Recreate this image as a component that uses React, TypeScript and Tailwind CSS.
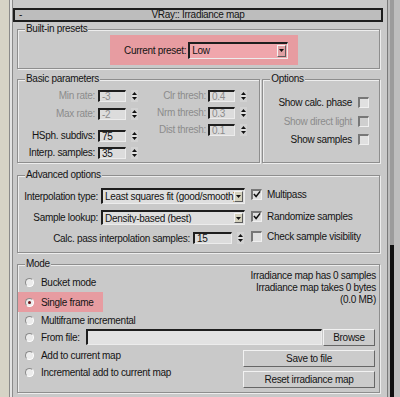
import React from "react";

const sunken =
  "border-t-2 border-l-2 border-t-[#1e1e1e] border-l-[#1e1e1e] border-r border-b border-r-[#ececec] border-b-[#ececec]";

function Spinner() {
  return (
    <span className="flex h-[12px] w-[7px] flex-col items-center justify-center bg-[#d2d2d2]">
      <svg width="7" height="12" viewBox="0 0 7 12">
        <path d="M3.5 2 L6 5 L1 5Z" fill="#111" />
        <path d="M1 6 L6 6" stroke="#f2f2f2" strokeWidth="0.8" />
        <path d="M1 7 L6 7 L3.5 10Z" fill="#111" />
      </svg>
    </span>
  );
}

function Field({ value, w, disabled }: { value: string; w: string; disabled?: boolean }) {
  return (
    <span
      className={`${sunken} ${w} flex h-[12px] items-center bg-[#dcdcdc] pl-[2px] leading-[10px] ${
        disabled ? "text-[#8c8c8c]" : "text-[#111]"
      }`}
    >
      {value}
    </span>
  );
}

function Spin({ value, w, disabled }: { value: string; w: string; disabled?: boolean }) {
  return (
    <span className="flex items-center gap-[5px]">
      <Field value={value} w={w} disabled={disabled} />
      <Spinner />
    </span>
  );
}

function Check({ checked, disabled }: { checked?: boolean; disabled?: boolean }) {
  return (
    <span
      className={`flex h-[11px] w-[11px] items-center justify-center border-t-2 border-l-2 border-r border-b border-t-[#777] border-l-[#777] border-r-[#f0f0f0] border-b-[#f0f0f0] ${
        disabled ? "bg-[#cfcfcf]" : "bg-[#e0e0e0]"
      }`}
    >
      {checked && (
        <svg width="9" height="9" viewBox="0 0 9 9">
          <path d="M1 4 L3.5 6.8 L8 1" stroke="#111" strokeWidth="1.7" fill="none" />
        </svg>
      )}
    </span>
  );
}

function Radio({ checked, dot = "#111" }: { checked?: boolean; dot?: string }) {
  return (
    <span className="flex h-[9px] w-[9px] shrink-0 items-center justify-center rounded-full border border-t-[#8a8a8a] border-l-[#8a8a8a] border-b-white border-r-white bg-[#ececec]">
      {checked && <span className="h-[3px] w-[3px] rounded-full" style={{ background: dot }} />}
    </span>
  );
}

function Arrow({ bg }: { bg: string }) {
  return (
    <span
      className={`flex h-full w-[9px] items-center justify-center border border-t-[#f4f4f4] border-l-[#f4f4f4] border-b-[#5c5c5c] border-r-[#5c5c5c] ${bg}`}
    >
      <svg width="5" height="3" viewBox="0 0 5 3">
        <path d="M0 0 L5 0 L2.5 3Z" fill="#111" />
      </svg>
    </span>
  );
}

function Dropdown({ value, w, h, bg, arrowBg }: { value: string; w: string; h: string; bg: string; arrowBg: string }) {
  return (
    <span className={`${sunken} ${w} ${h} flex items-stretch ${bg} pr-px py-px`}>
      <span className="flex-1 overflow-hidden whitespace-nowrap pl-[2px] leading-[12px]">{value}</span>
      <Arrow bg={arrowBg} />
    </span>
  );
}

function Btn({ label, w }: { label: string; w: string }) {
  return (
    <span
      className={`${w} flex h-[17px] items-center justify-center border border-t-[#f2f2f2] border-l-[#f2f2f2] border-b-[#666] border-r-[#666] bg-[#cbcbcb]`}
    >
      {label}
    </span>
  );
}

function Group({ label, className, children }: { label: string; className: string; children: React.ReactNode }) {
  return (
    <div
      className={`relative border border-[#8e8e8e] shadow-[inset_1px_1px_0_#ededed,1px_1px_0_#ededed] ${className}`}
    >
      <span className="absolute -top-[7px] left-[7px] bg-[#c9c9c9] px-px leading-[12px]">{label}</span>
      {children}
    </div>
  );
}

export default function App() {
  return (
    <div className="flex h-[397px] w-[400px] overflow-hidden bg-[#c9c9c9] font-['Liberation_Sans',Arial,sans-serif] text-[10px] tracking-[-0.3px] text-[#141414]">
      <div className="w-[9px] bg-[#d6d3c6]" />
      <div className="w-px bg-[#8a8a8a]" />
      <div className="w-[2px] bg-[#e4e4e4]" />
      <div className="w-px bg-[#8a8a8a]" />

      <main className="flex w-[374px] flex-col">
        {/* rollout title */}
        <div className="mt-[8px] mr-[4px] grid h-[14px] grid-cols-[20px_1fr_20px] items-center border-2 border-[#1e1e1e] bg-[#bdbdbd] leading-[10px]">
          <span className="pl-[4px]">-</span>
          <span className="text-center">VRay:: Irradiance map</span>
          <span />
        </div>

        <div className="ml-[4px] flex w-[363px] flex-col">
          {/* built-in presets */}
          <Group label="Built-in presets" className="mt-[7px] h-[40px]">
            <div className="ml-[92px] mt-[5px] flex h-[30px] w-[188px] items-center bg-[#e79ca1] pl-[14px]">
              <span>Current preset:</span>
              <span className="ml-[2px]">
                <Dropdown value="Low" w="w-[100px]" h="h-[17px]" bg="bg-[#f0a6ac]" arrowBg="bg-[#dfa0a3]" />
              </span>
            </div>
          </Group>

          <div className="mt-[10px] flex h-[84px]">
            {/* basic parameters */}
            <Group label="Basic parameters" className="flex h-full w-[244px]">
              <div className="flex flex-col pt-[10px] leading-[12px]">
                <div className="flex h-[12px] items-center">
                  <span className="w-[77px] text-right text-[#8c8c8c]">Min rate:</span>
                  <span className="ml-[3px]">
                    <Spin value="-3" w="w-[28px]" disabled />
                  </span>
                </div>
                <div className="mt-[6px] flex h-[12px] items-center">
                  <span className="w-[77px] text-right text-[#8c8c8c]">Max rate:</span>
                  <span className="ml-[3px]">
                    <Spin value="-2" w="w-[28px]" disabled />
                  </span>
                </div>
                <div className="mt-[10px] flex h-[12px] items-center">
                  <span className="w-[77px] text-right">HSph. subdivs:</span>
                  <span className="ml-[3px]">
                    <Spin value="75" w="w-[28px]" />
                  </span>
                </div>
                <div className="mt-[5px] flex h-[12px] items-center">
                  <span className="w-[77px] text-right">Interp. samples:</span>
                  <span className="ml-[3px]">
                    <Spin value="35" w="w-[28px]" />
                  </span>
                </div>
              </div>
              <div className="ml-[1px] flex flex-col pt-[10px] leading-[12px] text-[#8c8c8c]">
                {[
                  ["Clr thresh:", "0.4"],
                  ["Nrm thresh:", "0.3"],
                  ["Dist thresh:", "0.1"],
                ].map(([l, v], i) => (
                  <div key={l} className={`flex h-[12px] items-center ${i ? "mt-[5px]" : ""}`}>
                    <span className="w-[67px] text-right">{l}</span>
                    <span className="ml-[2px]">
                      <Spin value={v} w="w-[27px]" disabled />
                    </span>
                  </div>
                ))}
              </div>
            </Group>

            {/* options */}
            <Group label="Options" className="ml-[2px] flex h-full w-[118px] flex-col items-end pr-[10px] pt-[16px]">
              <div className="flex h-[12px] items-center gap-[6px]">
                <span>Show calc. phase</span>
                <Check />
              </div>
              <div className="mt-[7px] flex h-[12px] items-center gap-[6px] text-[#8c8c8c]">
                <span>Show direct light</span>
                <Check disabled />
              </div>
              <div className="mt-[6px] flex h-[12px] items-center gap-[6px]">
                <span>Show samples</span>
                <Check />
              </div>
            </Group>
          </div>

          {/* advanced options */}
          <Group label="Advanced options" className="mt-[12px] flex h-[78px]">
            <div className="flex flex-col pt-[12px]">
              <div className="flex h-[16px] items-center">
                <span className="w-[80px] text-right">Interpolation type:</span>
                <span className="ml-[3px]">
                  <Dropdown
                    value="Least squares fit (good/smooth)"
                    w="w-[144px]"
                    h="h-[16px]"
                    bg="bg-[#dedede]"
                    arrowBg="bg-[#d4d1bd]"
                  />
                </span>
              </div>
              <div className="mt-[6px] flex h-[15px] items-center">
                <span className="w-[80px] text-right">Sample lookup:</span>
                <span className="ml-[3px]">
                  <Dropdown
                    value="Density-based (best)"
                    w="w-[144px]"
                    h="h-[15px]"
                    bg="bg-[#dedede]"
                    arrowBg="bg-[#d4d1bd]"
                  />
                </span>
              </div>
              <div className="mt-[7px] flex h-[12px] items-center">
                <span className="w-[172px] text-right">Calc. pass interpolation samples:</span>
                <span className="ml-[3px]">
                  <Spin value="15" w="w-[39px]" />
                </span>
              </div>
            </div>
            <div className="ml-[6px] flex flex-col pt-[12px]">
              <div className="flex h-[12px] items-center gap-[5px]">
                <Check checked />
                <span>Multipass</span>
              </div>
              <div className="mt-[10px] flex h-[12px] items-center gap-[5px]">
                <Check checked />
                <span>Randomize samples</span>
              </div>
              <div className="mt-[8px] flex h-[12px] items-center gap-[5px]">
                <Check />
                <span>Check sample visibility</span>
              </div>
            </div>
          </Group>

          {/* mode */}
          <Group label="Mode" className="mt-[11px] flex h-[129px] flex-col">
            <div className="flex h-[63px]">
              <div className="flex flex-col pt-[7px]">
                <div className="flex h-[20px] items-center gap-[7px] pl-[7px]">
                  <Radio />
                  <span>Bucket mode</span>
                </div>
                <div className="flex h-[20px] w-[85px] items-center gap-[7px] bg-[#e79ca1] pl-[7px]">
                  <Radio checked dot="#6b0f14" />
                  <span>Single frame</span>
                </div>
                <div className="flex h-[16px] items-center gap-[7px] pl-[7px]">
                  <Radio />
                  <span>Multiframe incremental</span>
                </div>
              </div>
              <div className="ml-auto pr-[3px] pt-[5px] text-right leading-[12px]">
                <div>Irradiance map has 0 samples</div>
                <div>Irradiance map takes 0 bytes</div>
                <div>(0.0 MB)</div>
              </div>
            </div>

            <div className="flex h-[18px] items-center pl-[7px] pr-[4px]">
              <Radio />
              <span className="ml-[7px]">From file:</span>
              <span className={`${sunken} ml-[6px] h-[16px] w-[236px] bg-[#e2e2e2]`} />
              <span className="ml-auto">
                <Btn label="Browse" w="w-[52px]" />
              </span>
            </div>

            <div className="flex pr-[4px] pt-[1px]">
              <div className="flex flex-col">
                <div className="flex h-[17px] items-center gap-[7px] pl-[7px]">
                  <Radio />
                  <span>Add to current map</span>
                </div>
                <div className="flex h-[17px] items-center gap-[7px] pl-[7px]">
                  <Radio />
                  <span>Incremental add to current map</span>
                </div>
              </div>
              <div className="ml-auto flex flex-col gap-[4px] pt-[3px]">
                <Btn label="Save to file" w="w-[132px]" />
                <Btn label="Reset irradiance map" w="w-[132px]" />
              </div>
            </div>
          </Group>
        </div>
      </main>

      <div className="w-px bg-[#7a7a7a]" />
      <div className="w-[2px] bg-[#bdbdbd]" />
      <div className="flex w-[4px] flex-col">
        <div className="h-[245px] bg-[#9c9c9c]" />
        <div className="flex-1 bg-[#101010]" />
      </div>
      <div className="flex-1 bg-[#bebebe]" />
    </div>
  );
}
